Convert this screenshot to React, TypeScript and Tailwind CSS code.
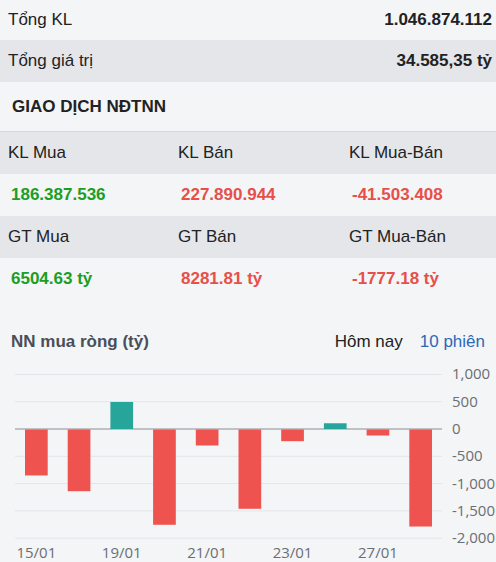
const summary = [
  { label: "Tổng KL", value: "1.046.874.112", shaded: false },
  { label: "Tổng giá trị", value: "34.585,35 tỷ", shaded: true },
];

const foreignRows = [
  {
    heads: ["KL Mua", "KL Bán", "KL Mua-Bán"],
    values: ["186.387.536", "227.890.944", "-41.503.408"],
  },
  {
    heads: ["GT Mua", "GT Bán", "GT Mua-Bán"],
    values: ["6504.63 tỷ", "8281.81 tỷ", "-1777.18 tỷ"],
  },
];

const sessions = [
  { date: "15/01", net: -842 },
  { date: "16/01", net: -1130 },
  { date: "19/01", net: 495 },
  { date: "20/01", net: -1745 },
  { date: "21/01", net: -293 },
  { date: "22/01", net: -1452 },
  { date: "23/01", net: -214 },
  { date: "26/01", net: 105 },
  { date: "27/01", net: -110 },
  { date: "28/01", net: -1777 },
];

const ticks = [1000, 500, 0, -500, -1000, -1500, -2000];

function valueColor(i: number) {
  return i === 0 ? "text-[#1c9e24]" : "text-[#e64f4a]";
}

function NetChart() {
  const left = 15;
  const right = 442;
  const zeroY = 69;
  const scale = 27.3 / 500;
  const step = (right - left) / sessions.length;
  const barW = 22.7;
  const y = (v: number) => zeroY - v * scale;

  return (
    <svg width="496" height="202" className="block" style={{ fontFamily: '"Open Sans", sans-serif' }}>
      {ticks.map((t) => (
        <g key={t}>
          <line
            x1={left}
            x2={right}
            y1={y(t)}
            y2={y(t)}
            stroke={t === 0 ? "#8a8d93" : "#e3e5e8"}
            strokeWidth={1}
          />
          <text x={452} y={y(t) + 5} fontSize="15" fill="#6b6e73">
            {t.toLocaleString("en-US")}
          </text>
        </g>
      ))}
      {sessions.map((s, i) => {
        const x = left + i * step + (step - barW) / 2;
        const top = s.net >= 0 ? y(s.net) : zeroY + 0.5;
        const h = Math.abs(s.net) * scale;
        return (
          <rect
            key={s.date}
            x={x}
            y={top}
            width={barW}
            height={h}
            fill={s.net >= 0 ? "#26a69a" : "#ef5350"}
          />
        );
      })}
      {sessions.map((s, i) =>
        i % 2 === 0 ? (
          <text
            key={s.date}
            x={left + i * step + step / 2}
            y={198}
            fontSize="15"
            fill="#6b6e73"
            textAnchor="middle"
          >
            {s.date}
          </text>
        ) : null
      )}
    </svg>
  );
}

export default function App() {
  return (
    <div
      className="w-[496px] h-[562px] overflow-hidden bg-[#f4f5f7] text-[17px] text-[#222]"
      style={{ fontFamily: '"Liberation Sans", Arial, sans-serif' }}
    >
      {summary.map((row) => (
        <div
          key={row.label}
          className={`flex items-center justify-between pl-2 pr-1 ${
            row.shaded ? "h-[42px] bg-[#e4e6ea]" : "h-[40px]"
          }`}
        >
          <span>{row.label}</span>
          <span className="font-bold">{row.value}</span>
        </div>
      ))}

      <div className="h-[50px] flex items-center pl-3 font-bold border-b border-[#d3d5d9]">
        GIAO DỊCH NĐTNN
      </div>

      {foreignRows.map((row, r) => (
        <div key={r}>
          <div className="grid grid-cols-[170px_171px_1fr] h-[42px] items-center bg-[#e4e6ea] pl-2">
            {row.heads.map((h) => (
              <span key={h}>{h}</span>
            ))}
          </div>
          <div className="grid grid-cols-[170px_171px_1fr] h-[42px] items-center pl-[11px] font-bold">
            {row.values.map((v, i) => (
              <span key={v} className={valueColor(i)}>
                {v}
              </span>
            ))}
          </div>
        </div>
      ))}

      <div className="pt-[31px]">
        <div className="flex items-center justify-between h-[22px] pl-[11px] pr-[11px]">
          <span className="font-bold text-[#4a4f57]">NN mua ròng (tỷ)</span>
          <div className="flex gap-[17px]">
            <span className="text-[#222]">Hôm nay</span>
            <span className="text-[#2d68b8]">10 phiên</span>
          </div>
        </div>
        <div className="mt-[7px]">
          <NetChart />
        </div>
      </div>
    </div>
  );
}
